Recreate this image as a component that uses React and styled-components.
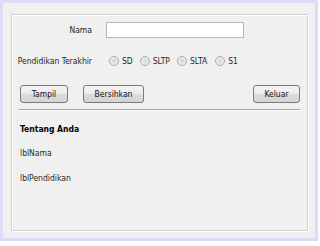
import React from "react";
import styled, { createGlobalStyle } from "styled-components";

const Global = createGlobalStyle`
  html, body { margin: 0; padding: 0; background: #ffffff; }
  body { font-family: "DejaVu Sans Condensed", "DejaVu Sans", sans-serif; }
`;

const Window = styled.div`
  box-sizing: border-box;
  width: 318px;
  height: 241px;
  border: 3px solid #dcdcf6;
  background: #f0f0f0;
  padding: 11px 7px 7px 8px;
  display: flex;
`;

const Panel = styled.div`
  flex: 1;
  box-sizing: border-box;
  border: 1px solid #d3d3d3;
  box-shadow: inset 1px 1px 0 #ffffff, 1px 1px 0 #ffffff;
  padding: 7px 7px 0 8px;
  display: flex;
  flex-direction: column;
  font-family: "DejaVu Sans Condensed", "DejaVu Sans", sans-serif;
  font-stretch: semi-condensed;
  font-size: 8.5px;
  color: #262626;
`;

const FormRow = styled.div`
  display: grid;
  grid-template-columns: 80px 1fr;
  column-gap: 14px;
  align-items: center;
  height: 16px;
  margin-left: -8px;
  margin-top: ${(p) => p.$mt || 0}px;
`;

const Label = styled.span`
  text-align: right;
  white-space: nowrap;
`;

const TextField = styled.div`
  box-sizing: border-box;
  width: 138px;
  height: 16px;
  background: #ffffff;
  border: 1px solid #b5b5b5;
`;

const RadioGroup = styled.div`
  display: flex;
  align-items: center;
  margin-left: 3px;
`;

const RadioItem = styled.label`
  display: flex;
  align-items: center;
  gap: 3px;
  margin-right: ${(p) => p.$mr || 0}px;
`;

const RadioDot = styled.span`
  box-sizing: border-box;
  width: 10px;
  height: 10px;
  border-radius: 50%;
  border: 1px solid #ababab;
  background: radial-gradient(circle at 50% 50%, #d6d6d6 0%, #e8e8e8 55%, #f6f6f6 100%);
`;

const ButtonRow = styled.div`
  display: flex;
  align-items: center;
  margin-top: 16px;
  height: 18px;
`;

const Button = styled.button`
  box-sizing: border-box;
  width: ${(p) => p.$w}px;
  height: 18px;
  margin-left: ${(p) => p.$ml || 0}px;
  border: 1px solid #7a7a7a;
  border-radius: 3px;
  background: linear-gradient(#f4f4f4 0%, #ebebeb 50%, #dcdcdc 51%, #d4d4d4 100%);
  font-family: inherit;
  font-stretch: inherit;
  font-size: 8.5px;
  color: #111;
  padding: 0;
`;

const Spacer = styled.div`
  flex: 1;
`;

const Separator = styled.div`
  height: 1px;
  background: #a0a0a0;
  border-bottom: 1px solid #ffffff;
  margin: 6px 0 0 -1px;
`;

const Heading = styled.div`
  font-weight: bold;
  color: #000;
  margin-top: 12px;
  line-height: 12px;
`;

const Info = styled.div`
  margin-top: ${(p) => p.$mt}px;
  line-height: 12px;
`;

const options = [
  { label: "SD", mr: 7 },
  { label: "SLTP", mr: 7 },
  { label: "SLTA", mr: 8 },
  { label: "S1", mr: 0 },
];

export default function App() {
  return (
    <>
      <Global />
      <Window>
        <Panel>
          <FormRow>
            <Label>Nama</Label>
            <TextField />
          </FormRow>
          <FormRow $mt={15}>
            <Label>Pendidikan Terakhir</Label>
            <RadioGroup>
              {options.map((o) => (
                <RadioItem key={o.label} $mr={o.mr}>
                  <RadioDot />
                  {o.label}
                </RadioItem>
              ))}
            </RadioGroup>
          </FormRow>
          <ButtonRow>
            <Button $w={48}>Tampil</Button>
            <Button $w={61} $ml={15}>Bersihkan</Button>
            <Spacer />
            <Button $w={47}>Keluar</Button>
          </ButtonRow>
          <Separator />
          <Heading>Tentang Anda</Heading>
          <Info $mt={12}>lblNama</Info>
          <Info $mt={13}>lblPendidikan</Info>
        </Panel>
      </Window>
    </>
  );
}
